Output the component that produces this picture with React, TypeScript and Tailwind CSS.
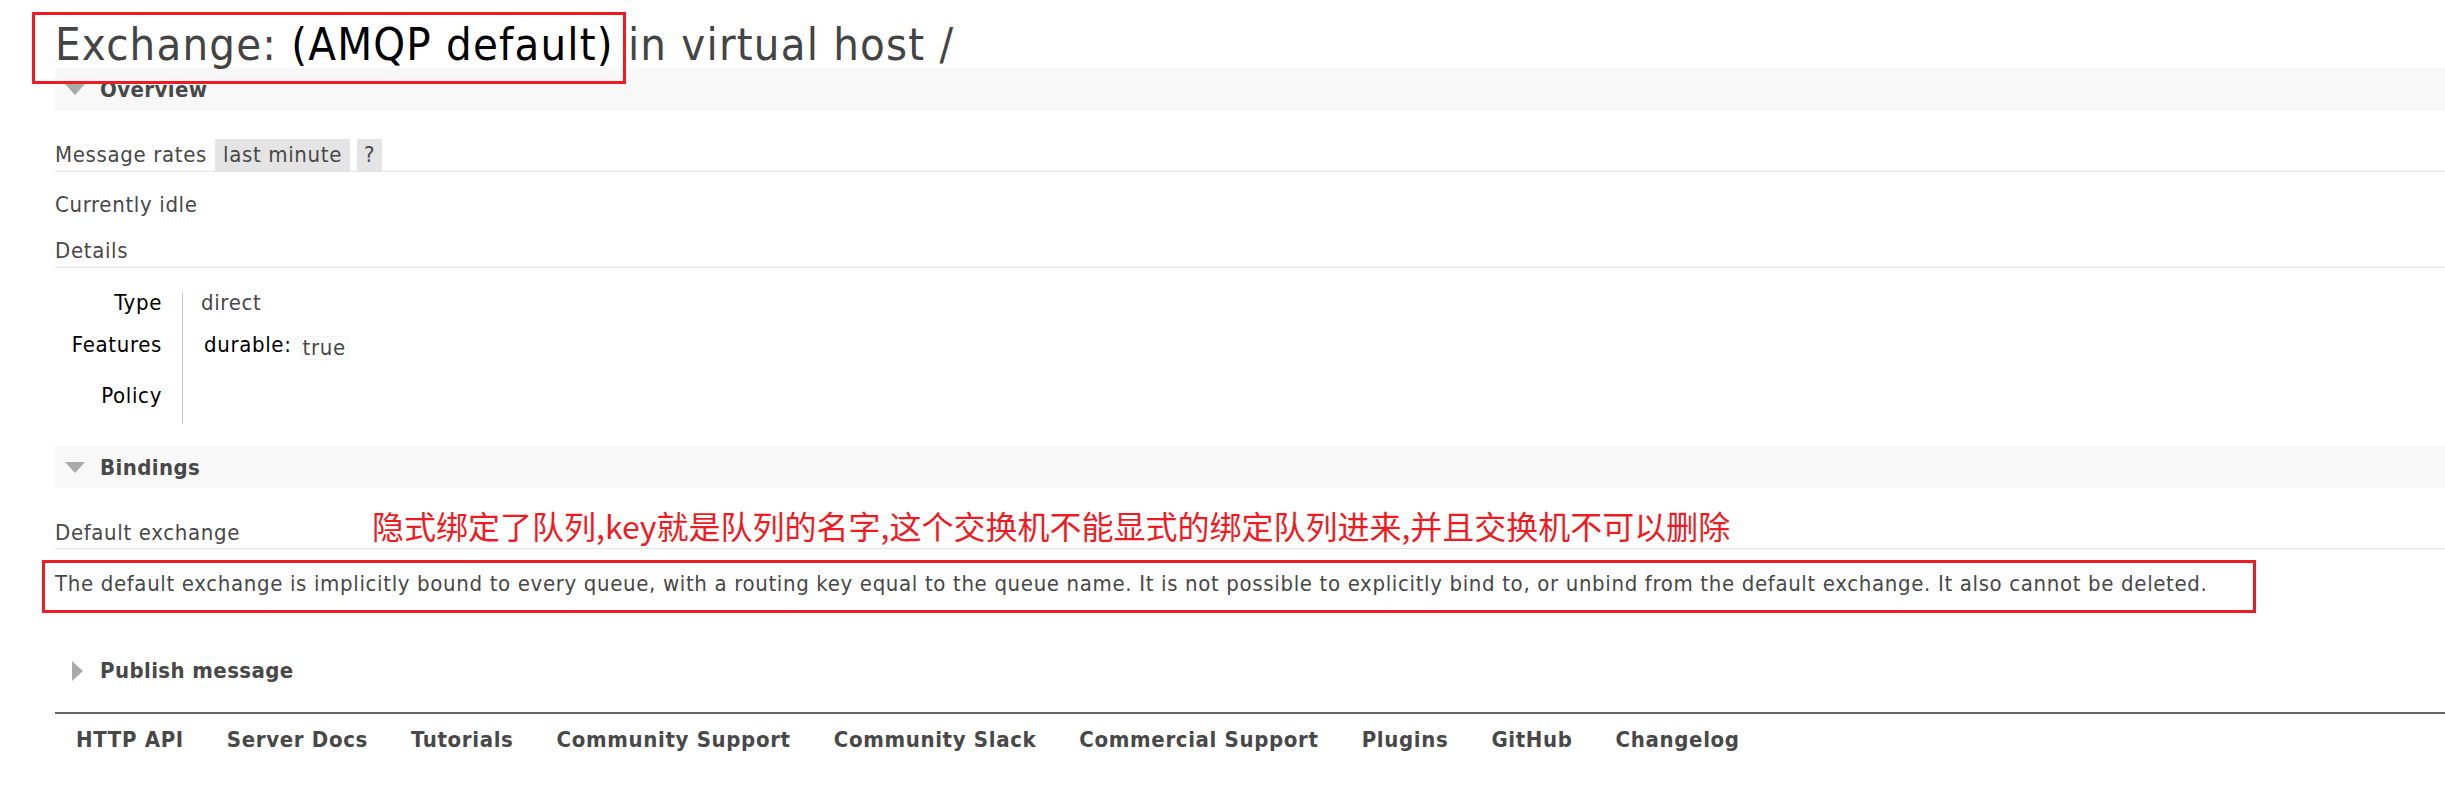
import React from "react";

const footerLinks = [
    "HTTP API",
    "Server Docs",
    "Tutorials",
    "Community Support",
    "Community Slack",
    "Commercial Support",
    "Plugins",
    "GitHub",
    "Changelog",
];

function Arrow({ open }: { open: boolean }) {
    if (open) {
        return (
            <svg width="20" height="11" viewBox="0 0 20 11" className="ml-[10px] mr-[15px]">
                <polygon points="0,0 20,0 10,11" fill="#aaaaaa" />
            </svg>
        );
    }
    return (
        <svg width="11" height="20" viewBox="0 0 11 20" className="ml-[17px] mr-[17px]">
            <polygon points="0,0 11,10 0,20" fill="#aaaaaa" />
        </svg>
    );
}

function SectionBar({ title, open, height }: { title: string; open: boolean; height: string }) {
    return (
        <div className={`flex items-center ${height} ${open ? "bg-[#f8f8f8]" : ""}`}>
            <Arrow open={open} />
            <span className="font-bold tracking-[0.4px]">{title}</span>
        </div>
    );
}

export default function App() {
    return (
        <div className="relative min-h-screen bg-white pl-[55px] font-['DejaVu_Sans_Condensed','DejaVu_Sans',sans-serif] text-[22px] tracking-[0.65px] text-[#484848]">
            {/* Title */}
            <div className="h-[68px] pt-[22px]">
                <h1 className="whitespace-nowrap text-[45px] font-normal leading-[45px] tracking-[1.2px] text-[#444444]">
                    Exchange: <span className="text-black">(AMQP default)</span> in virtual host /
                </h1>
            </div>
            <div className="pointer-events-none absolute left-[32px] top-[12px] h-[72px] w-[594px] border-[3px] border-[#ed1c24]" />

            {/* Overview */}
            <SectionBar title="Overview" open height="h-[43px]" />

            <div className="mt-[28px] flex h-[33px] border-b border-[#e2e2e2] leading-[32px]">
                <span>Message rates</span>
                <span className="ml-[8px] bg-[#e4e4e4] px-[8px]">last minute</span>
                <span className="ml-[7px] w-[25px] bg-[#e4e4e4] text-center">?</span>
            </div>

            <div className="mt-[17px] leading-[32px]">Currently idle</div>
            <div className="mt-[14px] h-[33px] border-b border-[#e2e2e2] leading-[32px]">Details</div>

            <div className="mt-[24px] flex leading-[22px]">
                <div className="flex w-[127px] flex-col items-end pr-[20px] text-black">
                    <div className="h-[42px]">Type</div>
                    <div className="h-[51px]">Features</div>
                    <div className="h-[39px]">Policy</div>
                </div>
                <div className="border-l border-[#cccccc] pl-[18px]">
                    <div className="h-[42px]">direct</div>
                    <div className="flex h-[51px] items-start pl-[3px]">
                        <span className="text-black">durable:</span>
                        <span className="ml-[9px] mt-[2px] rounded-[4px] border border-[#f2f2f2] px-[1px] leading-[22px]">
                            true
                        </span>
                    </div>
                    <div className="h-[39px]" />
                </div>
            </div>

            {/* Bindings */}
            <div className="mt-[22px]">
                <SectionBar title="Bindings" open height="h-[42px]" />
            </div>

            <div className="relative mt-[34px] h-[27px] border-b border-[#e2e2e2] leading-[22px]">
                <span>Default exchange</span>
                <span className="absolute left-[317px] top-[-13px] whitespace-nowrap font-['Noto_Sans_CJK_SC',sans-serif] text-[32px] leading-[32px] tracking-normal text-[#ed1c24]">
                    隐式绑定了队列,key就是队列的名字,这个交换机不能显式的绑定队列进来,并且交换机不可以删除
                </span>
            </div>

            <div className="relative mt-[24px] leading-[22px]">
                <p className="whitespace-nowrap">
                    The default exchange is implicitly bound to every queue, with a routing key equal to the queue name. It is not possible to explicitly bind to, or unbind from the default exchange. It also cannot be deleted.
                </p>
                <div className="pointer-events-none absolute left-[-13px] top-[-13px] h-[53px] w-[2214px] border-[3px] border-[#ed1c24]" />
            </div>

            {/* Publish message */}
            <div className="mt-[54px]">
                <SectionBar title="Publish message" open={false} height="h-[43px]" />
            </div>

            {/* Footer */}
            <div className="mt-[20px] border-t-2 border-[#666666] pt-[15px] pl-[21px]">
                <div className="flex gap-x-[43px] font-bold leading-[22px] tracking-[0.65px]">
                    {footerLinks.map((link) => (
                        <span key={link} className="whitespace-nowrap">
                            {link}
                        </span>
                    ))}
                </div>
            </div>
        </div>
    );
}
